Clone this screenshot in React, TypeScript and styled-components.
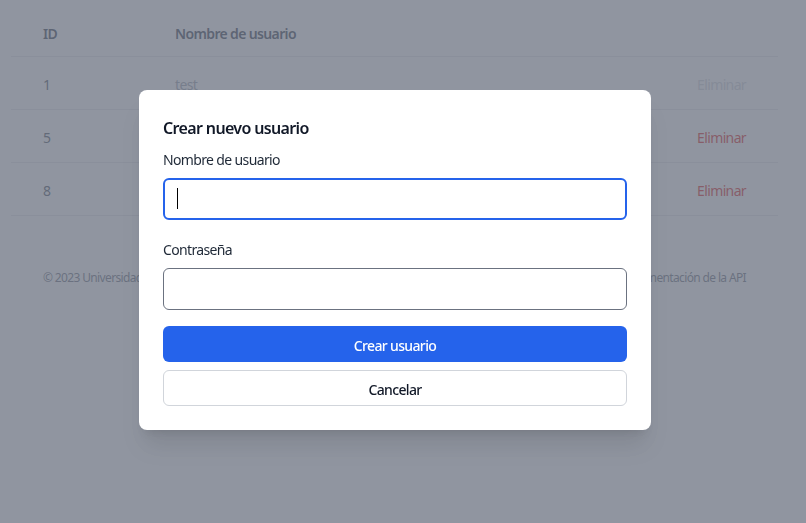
import React from "react";
import styled, { createGlobalStyle } from "styled-components";

interface IUser {
  id: number;
  name: string;
  locked?: boolean;
}

const users: IUser[] = [
  { id: 1, name: "test", locked: true },
  { id: 5, name: "admin" },
  { id: 8, name: "usuario8" },
];

const App: React.FC = () => {
  return (
    <>
      <GlobalStyle />
      <Page>
        <Table>
          <HeadRow>
            <HeadCell>ID</HeadCell>
            <HeadCell>Nombre de usuario</HeadCell>
            <HeadCell />
          </HeadRow>
          {users.map((u) => (
            <Row key={u.id}>
              <Cell>{u.id}</Cell>
              <Cell faded={u.locked}>{u.name}</Cell>
              <ActionCell>
                <DeleteLink disabled={u.locked}>Eliminar</DeleteLink>
              </ActionCell>
            </Row>
          ))}
        </Table>
        <Footer>
          <span>© 2023 Universidad Nacional. Todos los derechos reservados.</span>
          <span>Documentación de la API</span>
        </Footer>
      </Page>
      <Overlay>
        <Modal>
          <Title>Crear nuevo usuario</Title>
          <Field>
            <Label>Nombre de usuario</Label>
            <InputWrap>
              <Input type="text" focused />
              <Caret />
            </InputWrap>
          </Field>
          <Field>
            <Label>Contraseña</Label>
            <Input type="password" />
          </Field>
          <Actions>
            <PrimaryButton>Crear usuario</PrimaryButton>
            <SecondaryButton>Cancelar</SecondaryButton>
          </Actions>
        </Modal>
      </Overlay>
    </>
  );
};

const GlobalStyle = createGlobalStyle`
  html, body {
    margin: 0;
    padding: 0;
    background: #ffffff;
    font-family: "Noto Sans", "Open Sans", sans-serif;
    letter-spacing: -0.04em;
    color: #111827;
  }
  * { box-sizing: border-box; }
  button, input { letter-spacing: inherit; }
`;

const Page = styled.div`
  width: 790px;
  padding: 13px 12px 0 11px;
`;

const Table = styled.div`
  width: 767px;
  display: grid;
  grid-template-columns: 132px 1fr auto;
`;

const HeadRow = styled.div`
  display: contents;
`;

const HeadCell = styled.div`
  padding: 11px 32px 12px;
  font-size: 14px;
  line-height: 20px;
  font-weight: 600;
  color: #374151;
  border-bottom: 1px solid #e5e7eb;
`;

const Row = styled.div`
  display: contents;
`;

const Cell = styled.div<{ faded?: boolean }>`
  padding: 18px 32px 14px;
  font-size: 14px;
  line-height: 20px;
  color: ${(p) => (p.faded ? "#9ca3af" : "#4b5563")};
  border-bottom: 1px solid #e5e7eb;
`;

const ActionCell = styled(Cell)`
  text-align: right;
`;

const DeleteLink = styled.span<{ disabled?: boolean }>`
  color: ${(p) => (p.disabled ? "#d1d5db" : "#dc2626")};
`;

const Footer = styled.footer`
  width: 767px;
  display: flex;
  justify-content: space-between;
  padding: 54px 32px 0;
  font-size: 12px;
  line-height: 16px;
  color: #6b7280;
`;

const Overlay = styled.div`
  position: fixed;
  inset: 0;
  background: rgba(107, 114, 128, 0.75);
  display: flex;
  align-items: center;
  justify-content: center;
  padding: 0 16px 4px 0;
`;

const Modal = styled.div`
  width: 512px;
  background: #ffffff;
  border-radius: 8px;
  padding: 24px;
  box-shadow: 0 20px 25px -5px rgba(0, 0, 0, 0.1), 0 8px 10px -6px rgba(0, 0, 0, 0.1);
  display: flex;
  flex-direction: column;
`;

const Title = styled.h3`
  margin: 0 0 8px;
  font-size: 16px;
  line-height: 28px;
  font-weight: 600;
  color: #111827;
`;

const Field = styled.div`
  display: flex;
  flex-direction: column;
  gap: 8px;
  & + & {
    margin-top: 20px;
  }
`;

const Label = styled.label`
  font-size: 14px;
  line-height: 20px;
  color: #1f2937;
`;

const InputWrap = styled.div`
  position: relative;
`;

const Input = styled.input<{ focused?: boolean }>`
  width: 100%;
  height: 42px;
  border-radius: 6px;
  padding: 0 12px;
  font-size: 16px;
  font-family: inherit;
  outline: none;
  background: #fff;
  border: ${(p) => (p.focused ? "2px solid #2563eb" : "1px solid #6b7280")};
`;

const Caret = styled.span`
  position: absolute;
  left: 14px;
  top: 10px;
  width: 1px;
  height: 21px;
  background: #000;
`;

const Actions = styled.div`
  margin-top: 16px;
  display: flex;
  flex-direction: column;
  gap: 8px;
`;

const PrimaryButton = styled.button`
  height: 36px;
  padding: 3px 16px 0;
  border: none;
  border-radius: 6px;
  background: #2563eb;
  color: #ffffff;
  font-family: inherit;
  font-size: 14px;
  font-weight: 500;
`;

const SecondaryButton = styled.button`
  height: 36px;
  padding: 4px 16px 0;
  border: 1px solid #d1d5db;
  border-radius: 6px;
  background: #ffffff;
  color: #111827;
  font-family: inherit;
  font-size: 14px;
  font-weight: 500;
`;

export default App;
